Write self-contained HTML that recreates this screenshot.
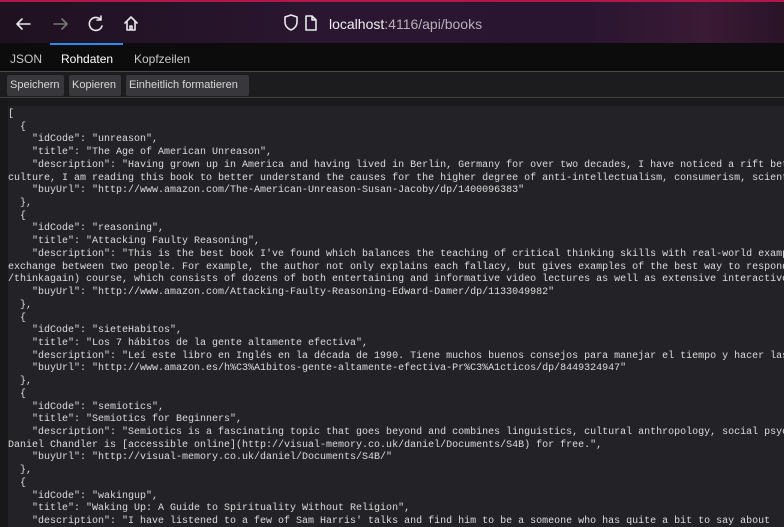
<!DOCTYPE html>
<html><head><meta charset="utf-8"><style>
*{margin:0;padding:0;box-sizing:border-box}
html,body{width:784px;height:527px;overflow:hidden;background:#1c1b22;font-family:"Liberation Sans",sans-serif}
#top{position:absolute;left:0;top:0;width:784px;height:43px;background:linear-gradient(90deg,#1f1120 0%,#2a1630 40%,#2a1530 75%,#3a1a35 90%,#2a1428 100%);border-top:2px solid #b0184a}
#tabs{position:absolute;top:43px;left:0;width:784px;height:29px;background:#0c0c0d;border-bottom:1px solid #4a4a4a}
.tab{position:absolute;top:9px;font-size:12px;color:#c8c8c8}
#tb{position:absolute;top:72px;left:0;width:784px;height:26px;background:#1c1c1e;border-bottom:1px solid #3f3f3f}
.btn{position:absolute;top:3px;height:21px;background:#38383c;color:#d8d8d8;font-size:11px;line-height:21px;padding:0 3px;border-radius:2px}
#strip{position:absolute;top:98px;left:0;width:784px;height:8px;background:#1a1a1c}
#side{position:absolute;top:98px;left:0;width:8px;height:429px;background:#18181a}
pre{position:absolute;left:8px;top:106px;width:776px;overflow:hidden;font-family:"Liberation Mono",monospace;font-size:10px;line-height:12.72px;color:#dcdcdc;white-space:pre;background:#232227;height:421px;padding-top:3px}
</style></head><body>
<div id="top">
<svg width="784" height="41" style="position:absolute;left:0;top:0" fill="none" stroke="#e8e8ec" stroke-width="1.6" stroke-linecap="round" stroke-linejoin="round">
<path d="M17 22h13M17 22l5-5M17 22l5 5"/>
<path d="M54 22h13M67 22l-5-5M67 22l-5 5" stroke="#777"/>
<path d="M101 18a6.5 6.5 0 1 0 1 6M101 14v4h-4"/>
<path d="M125 21l6-6 6 6M127 19v9h8v-9M130 28v-4h2v4"/>
<path d="M285 15l6-2 6 2v5c0 4-3 7-6 8c-3-1-6-4-6-8z"/>
<path d="M306 14h6l4 4v10h-10z M312 14v4h4"/>
</svg>
<div style="position:absolute;left:329px;top:14px;font-size:14px;color:#f0f0f0">localhost<span style="color:#b8b0b8">:4116/api/books</span></div>
</div>
<div id="tabs">
<div style="position:absolute;left:50px;top:0;width:73px;height:2px;background:#2a8cf0"></div>
<div class="tab" style="left:10px">JSON</div>
<div class="tab" style="left:61px;color:#fff">Rohdaten</div>
<div class="tab" style="left:134px">Kopfzeilen</div>
</div>
<div id="tb">
<div class="btn" style="left:7px;width:57px">Speichern</div>
<div class="btn" style="left:69px;width:52px">Kopieren</div>
<div class="btn" style="left:126px;width:123px">Einheitlich formatieren</div>
</div>
<div id="strip"></div><div id="side"></div>
<pre>[
  {
    "idCode": "unreason",
    "title": "The Age of American Unreason",
    "description": "Having grown up in America and having lived in Berlin, Germany for over two decades, I have noticed a rift between
culture, I am reading this book to better understand the causes for the higher degree of anti-intellectualism, consumerism, scientific
    "buyUrl": "http://www.amazon.com/The-American-Unreason-Susan-Jacoby/dp/1400096383"
  },
  {
    "idCode": "reasoning",
    "title": "Attacking Faulty Reasoning",
    "description": "This is the best book I've found which balances the teaching of critical thinking skills with real-world examples
exchange between two people. For example, the author not only explains each fallacy, but gives examples of the best way to respond
/thinkagain) course, which consists of dozens of both entertaining and informative video lectures as well as extensive interactive
    "buyUrl": "http://www.amazon.com/Attacking-Faulty-Reasoning-Edward-Damer/dp/1133049982"
  },
  {
    "idCode": "sieteHabitos",
    "title": "Los 7 hábitos de la gente altamente efectiva",
    "description": "Leí este libro en Inglés en la década de 1990. Tiene muchos buenos consejos para manejar el tiempo y hacer las
    "buyUrl": "http://www.amazon.es/h%C3%A1bitos-gente-altamente-efectiva-Pr%C3%A1cticos/dp/8449324947"
  },
  {
    "idCode": "semiotics",
    "title": "Semiotics for Beginners",
    "description": "Semiotics is a fascinating topic that goes beyond and combines linguistics, cultural anthropology, social psychology
Daniel Chandler is [accessible online](http://visual-memory.co.uk/daniel/Documents/S4B) for free.",
    "buyUrl": "http://visual-memory.co.uk/daniel/Documents/S4B/"
  },
  {
    "idCode": "wakingup",
    "title": "Waking Up: A Guide to Spirituality Without Religion",
    "description": "I have listened to a few of Sam Harris' talks and find him to be a someone who has quite a bit to say about
</pre>
</body></html>
